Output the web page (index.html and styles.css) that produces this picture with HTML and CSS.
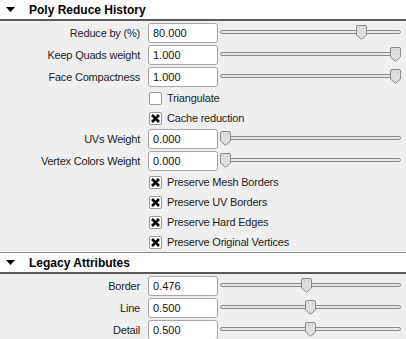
FILE: index.html
```html
<!DOCTYPE html>
<html lang="en">
<head>
    <meta charset="UTF-8">
    <meta name="viewport" content="width=device-width, initial-scale=1.0">
    <title>Attribute Editor</title>
    <link rel="stylesheet" href="styles.css">
</head>
<body>
    <section class="panel">
        <div class="panel-head">
            <svg class="arrow" width="9" height="5" viewBox="0 0 9 5"><path d="M0 0h9L4.5 5z" fill="#000"/></svg>
            <span class="panel-title">Poly Reduce History</span>
        </div>
        <div class="panel-body">
            <div class="attr">
                <label class="attr-label">Reduce by (%)</label>
                <input class="attr-field" type="text" value="80.000">
                <div class="slider" style="--v: 0.8">
                    <svg class="thumb" width="11" height="15" viewBox="0 0 11 15"><path d="M2 .5h7a1.5 1.5 0 0 1 1.5 1.5v8L5.5 14.3.5 10V2A1.5 1.5 0 0 1 2 .5z" fill="#dedede" stroke="#8a8a8a"/><path d="M3.5 2.5v1M7.5 2.5v1" stroke="#a8a8a8"/></svg>
                </div>
            </div>
            <div class="attr">
                <label class="attr-label">Keep Quads weight</label>
                <input class="attr-field" type="text" value="1.000">
                <div class="slider" style="--v: 1">
                    <svg class="thumb" width="11" height="15" viewBox="0 0 11 15"><path d="M2 .5h7a1.5 1.5 0 0 1 1.5 1.5v8L5.5 14.3.5 10V2A1.5 1.5 0 0 1 2 .5z" fill="#dedede" stroke="#8a8a8a"/><path d="M3.5 2.5v1M7.5 2.5v1" stroke="#a8a8a8"/></svg>
                </div>
            </div>
            <div class="attr">
                <label class="attr-label">Face Compactness</label>
                <input class="attr-field" type="text" value="1.000">
                <div class="slider" style="--v: 1">
                    <svg class="thumb" width="11" height="15" viewBox="0 0 11 15"><path d="M2 .5h7a1.5 1.5 0 0 1 1.5 1.5v8L5.5 14.3.5 10V2A1.5 1.5 0 0 1 2 .5z" fill="#dedede" stroke="#8a8a8a"/><path d="M3.5 2.5v1M7.5 2.5v1" stroke="#a8a8a8"/></svg>
                </div>
            </div>
            <div class="check">
                <span class="box"></span>
                <span>Triangulate</span>
            </div>
            <div class="check">
                <span class="box"><svg width="9" height="9" viewBox="0 0 9 9"><path d="M1 1l7 7M8 1L1 8" stroke="#000" stroke-width="2.6"/></svg></span>
                <span>Cache reduction</span>
            </div>
            <div class="attr">
                <label class="attr-label">UVs Weight</label>
                <input class="attr-field" type="text" value="0.000">
                <div class="slider" style="--v: 0">
                    <svg class="thumb" width="11" height="15" viewBox="0 0 11 15"><path d="M2 .5h7a1.5 1.5 0 0 1 1.5 1.5v8L5.5 14.3.5 10V2A1.5 1.5 0 0 1 2 .5z" fill="#dedede" stroke="#8a8a8a"/><path d="M3.5 2.5v1M7.5 2.5v1" stroke="#a8a8a8"/></svg>
                </div>
            </div>
            <div class="attr">
                <label class="attr-label">Vertex Colors Weight</label>
                <input class="attr-field" type="text" value="0.000">
                <div class="slider" style="--v: 0">
                    <svg class="thumb" width="11" height="15" viewBox="0 0 11 15"><path d="M2 .5h7a1.5 1.5 0 0 1 1.5 1.5v8L5.5 14.3.5 10V2A1.5 1.5 0 0 1 2 .5z" fill="#dedede" stroke="#8a8a8a"/><path d="M3.5 2.5v1M7.5 2.5v1" stroke="#a8a8a8"/></svg>
                </div>
            </div>
            <div class="check">
                <span class="box"><svg width="9" height="9" viewBox="0 0 9 9"><path d="M1 1l7 7M8 1L1 8" stroke="#000" stroke-width="2.6"/></svg></span>
                <span>Preserve Mesh Borders</span>
            </div>
            <div class="check">
                <span class="box"><svg width="9" height="9" viewBox="0 0 9 9"><path d="M1 1l7 7M8 1L1 8" stroke="#000" stroke-width="2.6"/></svg></span>
                <span>Preserve UV Borders</span>
            </div>
            <div class="check">
                <span class="box"><svg width="9" height="9" viewBox="0 0 9 9"><path d="M1 1l7 7M8 1L1 8" stroke="#000" stroke-width="2.6"/></svg></span>
                <span>Preserve Hard Edges</span>
            </div>
            <div class="check">
                <span class="box"><svg width="9" height="9" viewBox="0 0 9 9"><path d="M1 1l7 7M8 1L1 8" stroke="#000" stroke-width="2.6"/></svg></span>
                <span>Preserve Original Vertices</span>
            </div>
        </div>
    </section>

    <section class="panel">
        <div class="panel-head">
            <svg class="arrow" width="9" height="5" viewBox="0 0 9 5"><path d="M0 0h9L4.5 5z" fill="#000"/></svg>
            <span class="panel-title">Legacy Attributes</span>
        </div>
        <div class="panel-body">
            <div class="attr">
                <label class="attr-label">Border</label>
                <input class="attr-field" type="text" value="0.476">
                <div class="slider" style="--v: 0.476">
                    <svg class="thumb" width="11" height="15" viewBox="0 0 11 15"><path d="M2 .5h7a1.5 1.5 0 0 1 1.5 1.5v8L5.5 14.3.5 10V2A1.5 1.5 0 0 1 2 .5z" fill="#dedede" stroke="#8a8a8a"/><path d="M3.5 2.5v1M7.5 2.5v1" stroke="#a8a8a8"/></svg>
                </div>
            </div>
            <div class="attr">
                <label class="attr-label">Line</label>
                <input class="attr-field" type="text" value="0.500">
                <div class="slider" style="--v: 0.5">
                    <svg class="thumb" width="11" height="15" viewBox="0 0 11 15"><path d="M2 .5h7a1.5 1.5 0 0 1 1.5 1.5v8L5.5 14.3.5 10V2A1.5 1.5 0 0 1 2 .5z" fill="#dedede" stroke="#8a8a8a"/><path d="M3.5 2.5v1M7.5 2.5v1" stroke="#a8a8a8"/></svg>
                </div>
            </div>
            <div class="attr">
                <label class="attr-label">Detail</label>
                <input class="attr-field" type="text" value="0.500">
                <div class="slider" style="--v: 0.5">
                    <svg class="thumb" width="11" height="15" viewBox="0 0 11 15"><path d="M2 .5h7a1.5 1.5 0 0 1 1.5 1.5v8L5.5 14.3.5 10V2A1.5 1.5 0 0 1 2 .5z" fill="#dedede" stroke="#8a8a8a"/><path d="M3.5 2.5v1M7.5 2.5v1" stroke="#a8a8a8"/></svg>
                </div>
            </div>
        </div>
    </section>
</body>
</html>
```

FILE: styles.css
```css
/* Attribute editor panels */
body {
    margin: 0;
    background-color: #efefef;
    font-family: "Liberation Sans", Arial, sans-serif;
    font-size: 11px;
    color: #1e1e1e;
}

.panel + .panel {
    border-top: 1px solid #8c8c8c;
}

.panel-head {
    display: flex;
    align-items: center;
    height: 19px;
    padding-left: 6px;
    background-color: #fff;
    border-bottom: 2px solid #5a5a5a;
}

.arrow {
    margin-right: 14px;
}

.panel-title {
    font-size: 12px;
    font-weight: bold;
    color: #000;
}

.panel-body {
    padding-top: 1px;
}

/* Rows with a field and a slider */
.attr {
    display: flex;
    align-items: center;
    height: 22px;
}

.attr-label {
    width: 140px;
    text-align: right;
    letter-spacing: -0.2px;
}

.attr-field {
    width: 70px;
    height: 20px;
    margin: 0 0 0 8px;
    padding: 0 4px;
    box-sizing: border-box;
    border: 1px solid #a6a6a6;
    border-radius: 3px;
    background-color: #fff;
    font-family: inherit;
    font-size: 11px;
    color: #111;
    outline: none;
}

.slider {
    position: relative;
    width: 181px;
    height: 20px;
    margin-left: 2px;
}

.slider::before {
    content: "";
    position: absolute;
    left: 0;
    right: 0;
    top: 7px;
    height: 4px;
    box-sizing: border-box;
    border: 1px solid #8c8c8c;
    border-radius: 2px;
    background-color: #e6e6e6;
}

.thumb {
    position: absolute;
    top: 2px;
    left: calc((100% - 11px) * var(--v));
}

/* Checkbox rows */
.check {
    display: flex;
    align-items: center;
    gap: 5px;
    height: 20px;
    padding-left: 149px;
    letter-spacing: -0.2px;
}

.box {
    display: flex;
    align-items: center;
    justify-content: center;
    width: 13px;
    height: 13px;
    box-sizing: border-box;
    border: 1px solid #9a9a9a;
    border-radius: 2px;
    background-color: #fff;
}
```
